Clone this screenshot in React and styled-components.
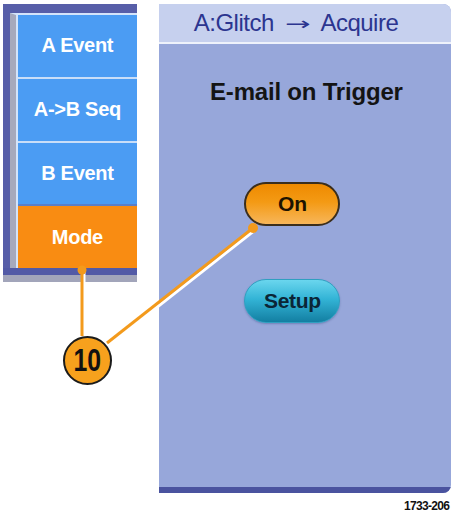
import React from "react";
import styled, { createGlobalStyle } from "styled-components";

const Global = createGlobalStyle`
  html, body { margin: 0; padding: 0; background: #ffffff; }
  body { font-family: "Liberation Sans", Arial, sans-serif; overflow: hidden; }
`;

const Page = styled.div`
  position: relative;
  width: 451px;
  height: 515px;
  overflow: hidden;
  display: flex;
  flex-direction: column;
`;

const Row = styled.div`
  display: flex;
  align-items: flex-start;
  gap: 22px;
  padding: 4px 0 0 3px;
`;

const Frame = styled.div`
  width: 135px;
  height: 278px;
  box-sizing: border-box;
  display: flex;
  flex-direction: column;
  background: #575ea8;
  padding-top: 9px;
`;

const MenuBody = styled.div`
  flex: 1;
  display: flex;
  margin-left: 7px;
  border-left: 6px solid #a6a9bc;
  border-top: 2px solid #d4e4fa;
`;

const MenuList = styled.div`
  flex: 1;
  display: flex;
  flex-direction: column;
  border-left: 2px solid #d4e4fa;
`;

const MenuButton = styled.div`
  flex: 1;
  display: flex;
  align-items: center;
  justify-content: center;
  background: ${(p) => (p.$active ? "#f98c12" : "#4b9cf3")};
  border-top: ${(p) => (p.$first ? "none" : p.$active ? "2px solid #5a7fc8" : "2px solid #c9def8")};
  color: #ffffff;
  font-weight: bold;
  font-size: 20px;
  letter-spacing: -0.3px;
`;

const BottomBar = styled.div`
  height: 14px;
  background: linear-gradient(#525aa6 0 50%, #a2a5ba 50% 100%);
`;

const Panel = styled.div`
  width: 295px;
  height: 489px;
  display: flex;
  flex-direction: column;
  background: #97a7da;
  border-bottom-right-radius: 8px;
  border-top-right-radius: 8px;
  overflow: hidden;
`;

const Header = styled.div`
  height: 38px;
  display: flex;
  align-items: center;
  padding-left: 35px;
  background: #c6d0ee;
  border-bottom: 2px solid #eef2fb;
  color: #2c3590;
  font-size: 24px;
  letter-spacing: -0.5px;
  white-space: nowrap;
`;

const Arrow = styled.span`
  display: inline-block;
  font-family: "DejaVu Sans", sans-serif;
  font-size: 18px;
  margin: 0 16px;
  transform: scaleX(1.7);
`;

const Body = styled.div`
  flex: 1;
  display: flex;
  flex-direction: column;
  align-items: center;
  padding-right: 25px;
  border-bottom: 6px solid #4a539f;
`;

const Title = styled.div`
  margin-top: 34px;
  margin-left: 28px;
  font-size: 24px;
  line-height: 27px;
  font-weight: bold;
  color: #141414;
  letter-spacing: -0.2px;
  white-space: nowrap;
`;

const Pill = styled.div`
  margin-top: ${(p) => p.$mt}px;
  width: 96px;
  height: 44px;
  box-sizing: border-box;
  border-radius: 22px;
  display: flex;
  align-items: center;
  justify-content: center;
  font-size: 21px;
  font-weight: bold;
  letter-spacing: -0.3px;
  color: ${(p) => (p.$kind === "on" ? "#1c1300" : "#0b2536")};
  border: ${(p) => (p.$kind === "on" ? "2px solid #3b2e1c" : "1px solid #2f9fc0")};
  background: ${(p) =>
    p.$kind === "on"
      ? "linear-gradient(#ee8a00 0%, #f49a14 45%, #f7b65a 100%)"
      : "linear-gradient(#6ad6ee 0%, #33b4d6 45%, #137fa2 100%)"};
  box-shadow: ${(p) => (p.$kind === "on" ? "none" : "0 1px 2px rgba(40,60,120,0.35)")};
`;

const Caption = styled.div`
  margin: 6px 0 0 404px;
  font-size: 12px;
  font-weight: bold;
  color: #111;
  letter-spacing: -0.7px;
  white-space: nowrap;
`;

const Overlay = styled.svg`
  position: absolute;
  left: 0;
  top: 0;
  pointer-events: none;
`;

const Badge = styled.div`
  position: absolute;
  left: 63px;
  top: 336px;
  width: 49px;
  height: 49px;
  box-sizing: border-box;
  border-radius: 50%;
  background: #f7a11d;
  border: 2px solid #1b1b1b;
  display: flex;
  align-items: center;
  justify-content: center;
`;

const BadgeText = styled.span`
  font-size: 31px;
  font-weight: bold;
  color: #111;
  transform: scaleX(0.8);
  line-height: 1;
`;

const items = ["A Event", "A->B Seq", "B Event", "Mode"];

export default function App() {
  return (
    <Page>
      <Global />
      <Row>
        <Frame>
          <MenuBody>
            <MenuList>
              {items.map((t, i) => (
                <MenuButton key={t} $first={i === 0} $active={t === "Mode"}>
                  {t}
                </MenuButton>
              ))}
            </MenuList>
          </MenuBody>
          <BottomBar />
        </Frame>
        <Panel>
          <Header>
            A:Glitch<Arrow>→</Arrow>Acquire
          </Header>
          <Body>
            <Title>E-mail on Trigger</Title>
            <Pill $kind="on" $mt={77}>On</Pill>
            <Pill $kind="setup" $mt={53}>Setup</Pill>
          </Body>
        </Panel>
      </Row>
      <Caption>1733-206</Caption>
      <Overlay width="451" height="515" viewBox="0 0 451 515">
        <line x1="84" y1="272" x2="84" y2="336" stroke="#ffffff" strokeWidth="3" />
        <line x1="82" y1="270" x2="82" y2="336" stroke="#f39a1c" strokeWidth="3" />
        <line x1="109" y1="345" x2="255" y2="230" stroke="#ffffff" strokeWidth="3" />
        <line x1="107" y1="343" x2="253" y2="228" stroke="#f39a1c" strokeWidth="3" />
        <circle cx="82" cy="270" r="4.5" fill="#f39a1c" />
        <circle cx="253" cy="228" r="5" fill="#f39a1c" />
      </Overlay>
      <Badge>
        <BadgeText>10</BadgeText>
      </Badge>
    </Page>
  );
}
